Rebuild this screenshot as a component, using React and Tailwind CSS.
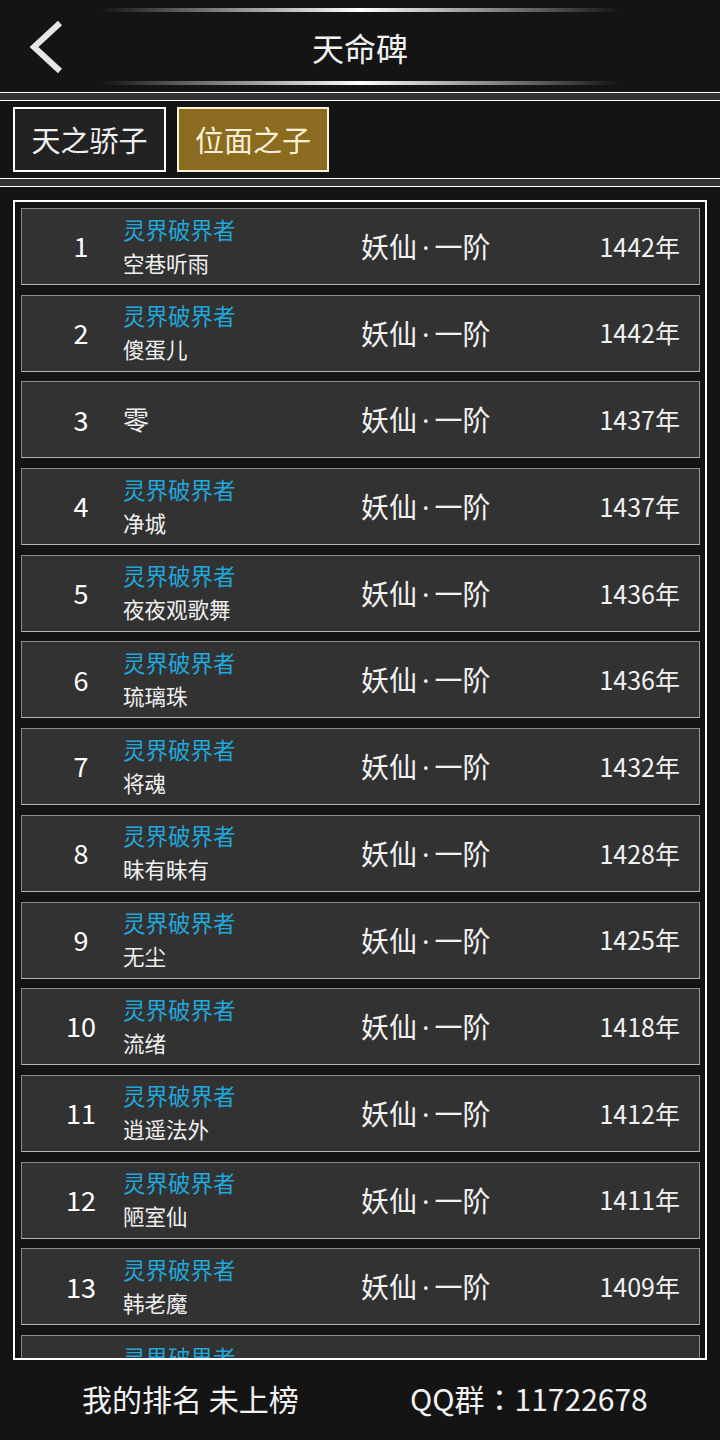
import React from "react";

const rows = [
  { rank: 1, title: "灵界破界者", name: "空巷听雨", years: 1442 },
  { rank: 2, title: "灵界破界者", name: "傻蛋儿", years: 1442 },
  { rank: 3, title: null, name: "零", years: 1437 },
  { rank: 4, title: "灵界破界者", name: "净城", years: 1437 },
  { rank: 5, title: "灵界破界者", name: "夜夜观歌舞", years: 1436 },
  { rank: 6, title: "灵界破界者", name: "琉璃珠", years: 1436 },
  { rank: 7, title: "灵界破界者", name: "将魂", years: 1432 },
  { rank: 8, title: "灵界破界者", name: "昧有昧有", years: 1428 },
  { rank: 9, title: "灵界破界者", name: "无尘", years: 1425 },
  { rank: 10, title: "灵界破界者", name: "流绪", years: 1418 },
  { rank: 11, title: "灵界破界者", name: "逍遥法外", years: 1412 },
  { rank: 12, title: "灵界破界者", name: "陋室仙", years: 1411 },
  { rank: 13, title: "灵界破界者", name: "韩老魔", years: 1409 },
];

function GlowLine() {
  return (
    <div className="mx-auto w-[520px] h-[4px] rounded-full bg-gradient-to-r from-transparent via-white to-transparent blur-[0.5px]" />
  );
}

function Separator() {
  return <div className="h-[9px] border-y border-white bg-[#333333]" />;
}

function Realm() {
  return (
    <div className="flex-1 text-[28px] text-[#f2f2f2]">
      妖仙
      <span className="mx-[5px]" style={{ fontFamily: '"Noto Sans", sans-serif' }}>
        ·
      </span>
      一阶
    </div>
  );
}

function RankRow({ row }) {
  return (
    <div className="flex items-center shrink-0 h-[77px] bg-[#323232] border border-[#8a8a8a] border-b-[#b4b4b4] border-r-[#9a9a9a] text-white">
      <div className="w-[101px] pl-[17px] text-center text-[27px]">{row.rank}</div>
      <div className="w-[238px] flex flex-col justify-center pb-[2px]">
        {row.title ? (
          <>
            <span className="text-[22.5px] leading-[34px] text-[#20a8dc]">{row.title}</span>
            <span className="text-[21.5px] leading-[34px] text-[#f0f0f0]">{row.name}</span>
          </>
        ) : (
          <span className="text-[26px] text-[#f0f0f0]">{row.name}</span>
        )}
      </div>
      <Realm />
      <div className="pr-[19px] text-[25px] text-[#f2f2f2]">{row.years}年</div>
    </div>
  );
}

function PartialRow() {
  return (
    <div className="shrink-0 h-[77px] bg-[#323232] border border-[#8a8a8a] pl-[101px] pt-[4px]">
      <span className="text-[22.5px] leading-[34px] text-[#20a8dc]">灵界破界者</span>
    </div>
  );
}

export default function App() {
  return (
    <div
      className="w-[720px] h-[1440px] bg-[#141414] flex flex-col overflow-hidden"
      style={{ fontFamily: '"Noto Sans CJK SC", "Noto Sans", sans-serif' }}
    >
      {/* Header */}
      <div className="h-[92px] flex flex-col pt-[8px]">
        <GlowLine />
        <div className="flex-1 flex items-center relative">
          <svg
            className="absolute left-[28px] top-[8px]"
            width="38"
            height="54"
            viewBox="0 0 38 54"
          >
            <path d="M32 3 L6 27 L32 51" fill="none" stroke="#e6e6e6" strokeWidth="6" />
          </svg>
          <div className="w-full text-center text-[32px] text-[#f2f2f2]">天命碑</div>
        </div>
        <GlowLine />
        <div className="h-[7px]" />
      </div>
      <Separator />

      {/* Tabs */}
      <div className="h-[77px] flex items-center gap-[11px] px-[13px]">
        <div className="w-[153px] h-[65px] border-2 border-white bg-[#222222] flex items-center justify-center text-[29px] text-[#f0f0f0]">
          天之骄子
        </div>
        <div className="w-[152px] h-[65px] border-2 border-[#fbf2da] bg-[#8b6b20] flex items-center justify-center text-[29px] text-[#faf0d6]">
          位面之子
        </div>
      </div>
      <Separator />

      {/* List */}
      <div className="mt-[13px] mx-[13px] h-[1160px] border-2 border-white overflow-hidden">
        <div className="flex flex-col gap-[9.7px] pt-[6px] pl-[6px] pr-[5px]">
          {rows.map((r) => (
            <RankRow key={r.rank} row={r} />
          ))}
          <PartialRow />
        </div>
      </div>

      {/* Footer */}
      <div className="flex-1 flex items-center pb-[3px] text-[30px] text-[#f2f2f2]">
        <div className="w-[378px] pl-[82px]">我的排名 未上榜</div>
        <div className="pl-[32px]">
          QQ群<span style={{ fontFamily: '"Noto Sans CJK TC", sans-serif' }}>：</span>11722678
        </div>
      </div>
    </div>
  );
}
